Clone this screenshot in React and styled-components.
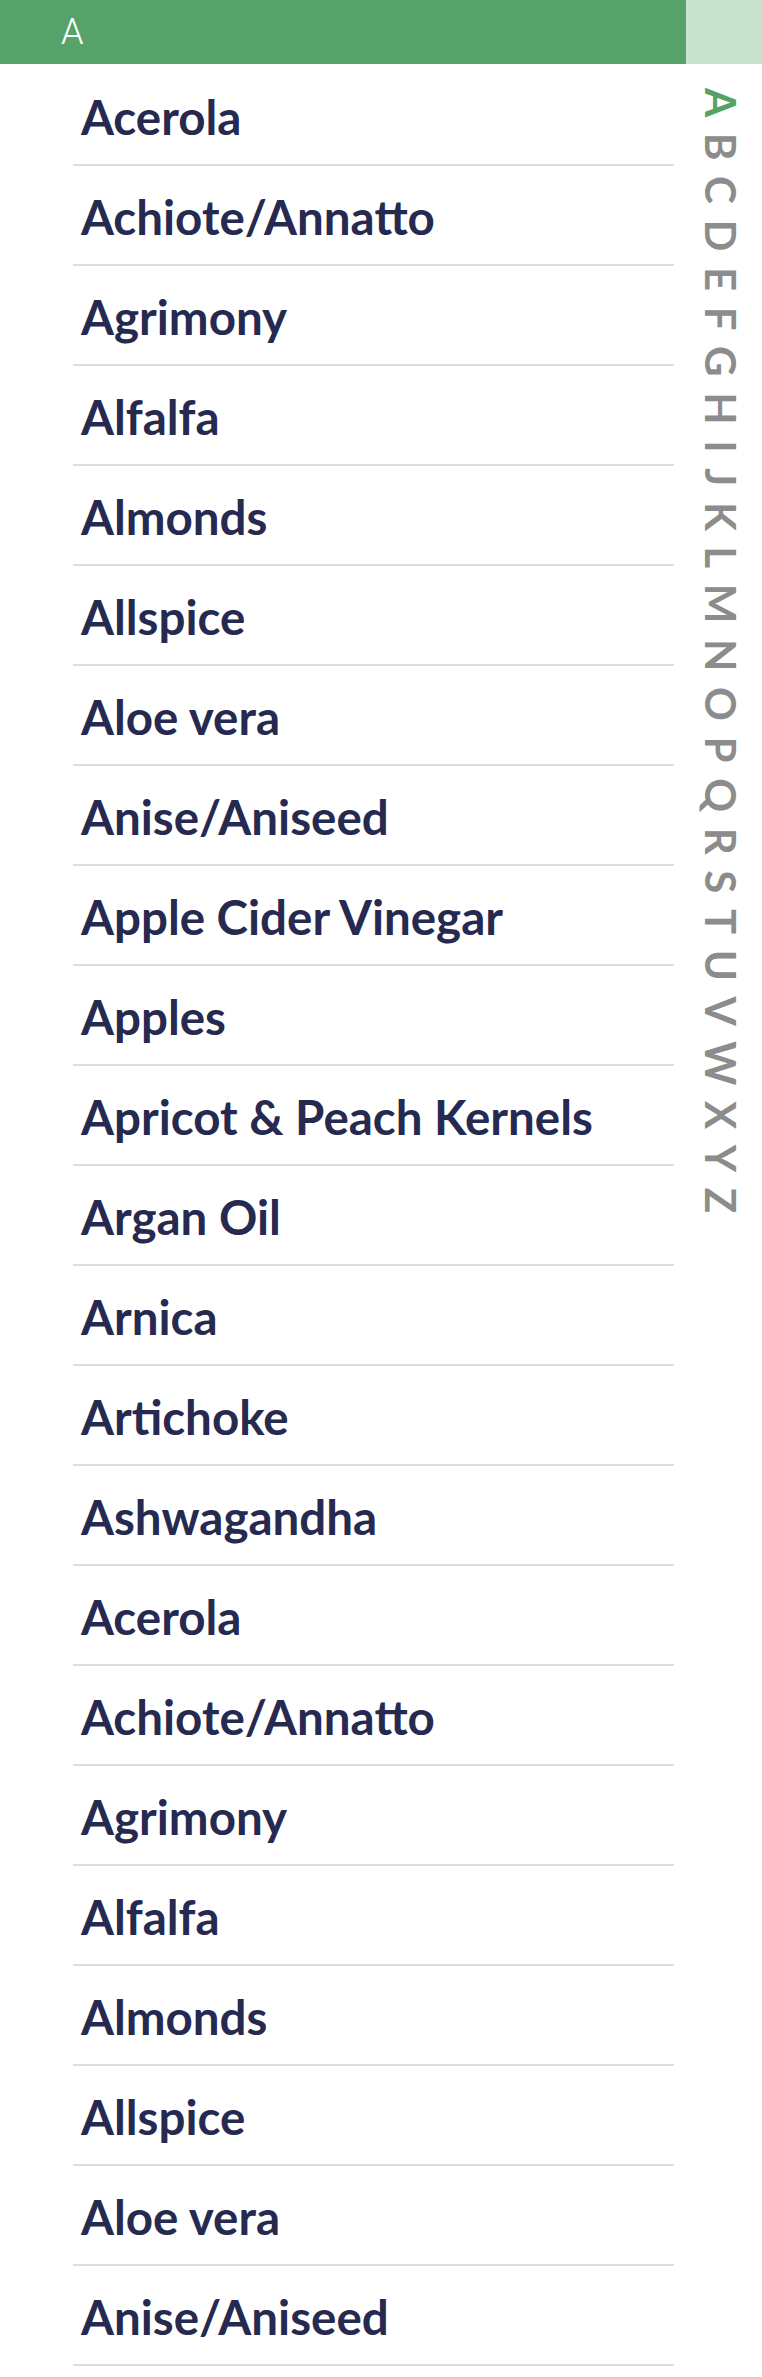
import React from "react";
import styled, { createGlobalStyle } from "styled-components";

const GlobalStyle = createGlobalStyle`
  html, body {
    margin: 0;
    padding: 0;
    background: #ffffff;
  }
  body {
    font-family: "Lato", "Noto Sans", sans-serif;
  }
`;

const Page = styled.div`
  display: flex;
  flex-direction: column;
  width: 762px;
`;

const Header = styled.div`
  display: flex;
  height: 64px;
`;

const HeaderTitle = styled.div`
  flex: 1;
  display: flex;
  align-items: center;
  padding-left: 61px;
  background: #56a268;
  color: #ffffff;
  font-family: "Roboto", "Liberation Sans", sans-serif;
  font-weight: 300;
  font-size: 36px;
`;

const HeaderSide = styled.div`
  width: 76px;
  background: #c9e3d1;
`;

const Body = styled.div`
  display: flex;
`;

const List = styled.ul`
  flex: 1;
  list-style: none;
  margin: 0;
  padding: 2px 12px 0 73px;
`;

const Row = styled.li`
  display: flex;
  align-items: center;
  height: 100px;
  box-sizing: border-box;
  padding: 4px 0 0 8px;
  border-bottom: 2px solid #dedede;
  color: #262a50;
  font-family: "Lato", "Noto Sans", sans-serif;
  font-weight: 700;
  font-size: 47.5px;
  line-height: 1;
`;

const IndexBar = styled.div`
  width: 76px;
  display: flex;
  justify-content: center;
  padding: 24px 6px 0 0;
  box-sizing: border-box;
`;

const IndexLetters = styled.div`
  writing-mode: vertical-rl;
  font-family: "Lato", "Noto Sans", sans-serif;
  font-weight: 700;
  font-size: 42px;
  line-height: 1;
  letter-spacing: 15.6px;
  color: #8c8c8c;
  height: max-content;
`;

const Letter = styled.span`
  color: ${(p) => (p.$active ? "#55a266" : "inherit")};
`;

const ITEMS = [
  "Acerola",
  "Achiote/Annatto",
  "Agrimony",
  "Alfalfa",
  "Almonds",
  "Allspice",
  "Aloe vera",
  "Anise/Aniseed",
  "Apple Cider Vinegar",
  "Apples",
  "Apricot & Peach Kernels",
  "Argan Oil",
  "Arnica",
  "Artichoke",
  "Ashwagandha",
  "Acerola",
  "Achiote/Annatto",
  "Agrimony",
  "Alfalfa",
  "Almonds",
  "Allspice",
  "Aloe vera",
  "Anise/Aniseed",
];

const LETTERS = "ABCDEFGHIJKLMNOPQRSTUVWXYZ".split("");

export default function App() {
  const current = "A";

  return (
    <>
      <GlobalStyle />
      <Page>
        <Header>
          <HeaderTitle>{current}</HeaderTitle>
          <HeaderSide />
        </Header>
        <Body>
          <List>
            {ITEMS.map((name, i) => (
              <Row key={i}>{name}</Row>
            ))}
          </List>
          <IndexBar>
            <IndexLetters>
              {LETTERS.map((l) => (
                <Letter key={l} $active={l === current}>
                  {l}
                </Letter>
              ))}
            </IndexLetters>
          </IndexBar>
        </Body>
      </Page>
    </>
  );
}
